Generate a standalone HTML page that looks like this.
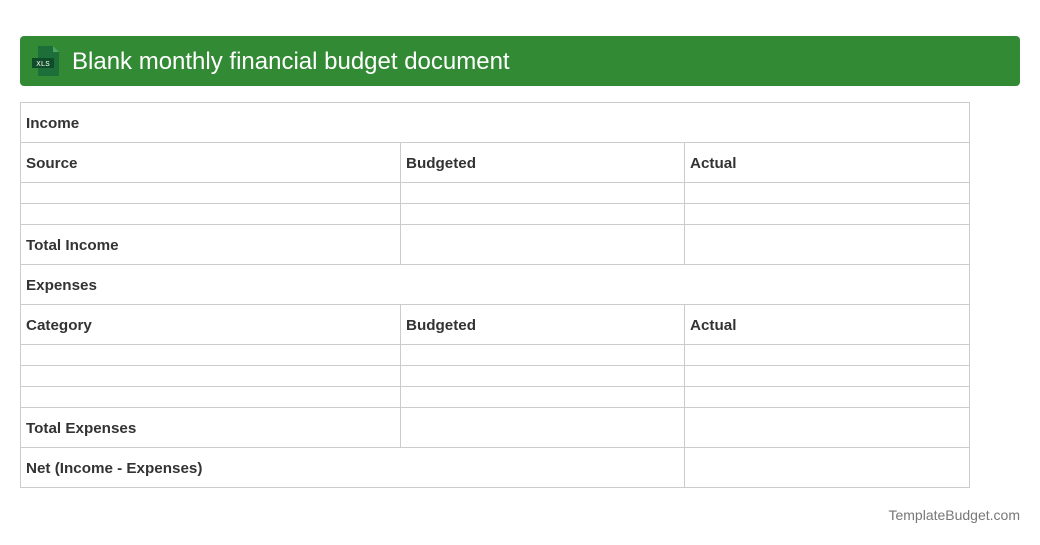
<!DOCTYPE html>
<html><head><meta charset="utf-8"><style>
*{margin:0;padding:0;box-sizing:border-box}
body{width:1040px;height:545px;background:#fff;font-family:"Liberation Sans",Arial,sans-serif;position:relative;overflow:hidden}
.hdr{position:absolute;left:20px;top:36px;width:1000px;height:50px;background:#338a35;border-radius:4px}
.hdr .t{position:absolute;left:52px;top:12px;color:#fff;font-size:24px;line-height:28px}
.c{position:absolute;border:1px solid #ccc;font-weight:bold;font-size:15.2px;color:#333;padding-left:5px;padding-top:2px;display:flex;align-items:center}
.ft{position:absolute;right:20px;top:507px;font-size:14px;color:#777}
</style></head><body>
<div class="hdr">
<svg style="position:absolute;left:10px;top:10px" width="30" height="30" viewBox="0 0 30 30">
<path d="M8 0H23L29 6V30H8Z" fill="#1e6e3a"/>
<path d="M23 0V6H29Z" fill="#4aa564"/>
<rect x="2" y="12" width="22" height="10" fill="#0f4d28"/>
<text x="13" y="20" font-size="7.5" fill="#fff" text-anchor="middle" font-family="Liberation Mono,monospace">XLS</text>
</svg>
<div class="t">Blank monthly financial budget document</div>
</div>
<div id="tb"></div>
<div class="ft">TemplateBudget.com</div>
<script>
var x=[20,400,684,969];
var rows=[
[102,142,[["Income",0,3]]],
[142,182,[["Source",0,1],["Budgeted",1,2],["Actual",2,3]]],
[182,203,[["",0,1],["",1,2],["",2,3]]],
[203,224,[["",0,1],["",1,2],["",2,3]]],
[224,264,[["Total Income",0,1],["",1,2],["",2,3]]],
[264,304,[["Expenses",0,3]]],
[304,344,[["Category",0,1],["Budgeted",1,2],["Actual",2,3]]],
[344,365,[["",0,1],["",1,2],["",2,3]]],
[365,386,[["",0,1],["",1,2],["",2,3]]],
[386,407,[["",0,1],["",1,2],["",2,3]]],
[407,447,[["Total Expenses",0,1],["",1,2],["",2,3]]],
[447,487,[["Net (Income - Expenses)",0,2],["",2,3]]]
];
var h="";
rows.forEach(function(r){r[2].forEach(function(c){
var l=x[c[1]],w=x[c[2]]-l+1;
h+='<div class="c" style="left:'+l+'px;top:'+r[0]+'px;width:'+w+'px;height:'+(r[1]-r[0]+1)+'px">'+c[0]+'</div>';});});
document.getElementById("tb").innerHTML=h;
</script>
</body></html>
